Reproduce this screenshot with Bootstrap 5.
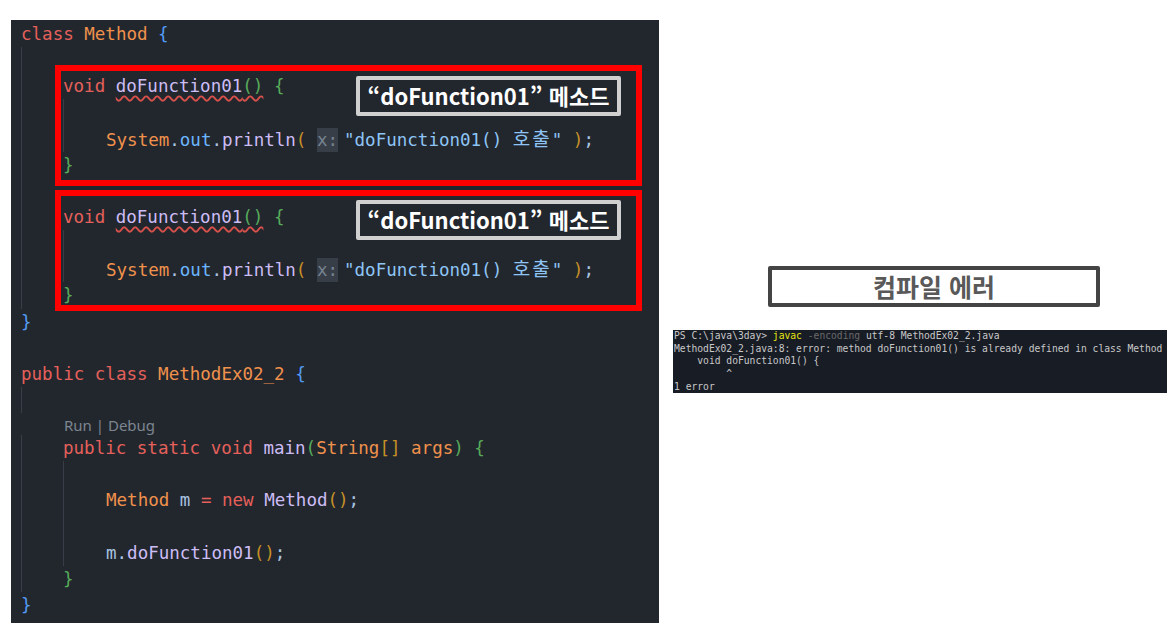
<!DOCTYPE html>
<html lang="ko">
<head>
<meta charset="utf-8">
<title>Method</title>
<link rel="stylesheet" href="https://cdn.jsdelivr.net/npm/bootstrap@5.3.0/dist/css/bootstrap.min.css">
<style>
body{background:#fff;height:642px;overflow:hidden}
.code-panel{width:648px;height:603px;margin:20px 0 0 11px;padding:1px 0 0 10px;background:#22272e;font-family:"DejaVu Sans Mono","Noto Sans CJK KR",monospace;font-size:17.52px;color:#adbac7;flex:none}
.ln{height:26.15px;line-height:26.15px;white-space:pre}
.gd{margin-left:0;border-left:1px solid #373e47;padding-left:42px}
.gd .gd{margin-left:-1px}
.gd>.ln{margin-left:-1px}
.gd .gd>.ln{margin-left:0}
.lens{height:22px;line-height:25px;font-family:"Noto Sans","Liberation Sans",sans-serif;font-size:15px;color:#7d8590;margin-left:43px}
.k{color:#e5605a}.t{color:#f0914c}.f{color:#cdbdf5}.v{color:#6cb6ff}.s{color:#8ec5f5}.p{color:#a9c3e0}
.b1{color:#539bf5}.b2{color:#57ab5a}.b3{color:#c69026}
.squig{text-decoration:underline wavy #d8504a 1.5px;text-underline-offset:3px}
.hint{background:#373e47;color:#768390;padding:2px 0;margin-right:6px}
.ko{font-size:19px;letter-spacing:2px}
.red-frame{left:44px;width:587px;border:6px solid #f00}
.frame-a{top:45px;height:121px}
.frame-b{top:170px;height:121px}
.tag{left:295px;top:5px;width:265px;height:40px;border:4px solid #d0d0d0;border-radius:2px;background:#22272e;color:#fff;font-family:"Noto Sans CJK KR","Liberation Sans",sans-serif;font-weight:700;font-size:22px;line-height:30px;white-space:nowrap}
.frame-b .tag{top:4px}
.side{margin-left:14px;width:494px;flex:none}
.cap{width:332px;height:41px;margin:266px 0 23px 95px;border:4px solid #444;border-radius:2px;color:#595959;font-family:"Noto Sans CJK KR",sans-serif;font-weight:700;font-size:25px;line-height:33px}
.term{height:63px;padding-left:1px;background:#181c25;color:#c8c8c8;font-family:"DejaVu Sans Mono",monospace;font-size:9.67px;line-height:12.7px;overflow:hidden}
.term div{white-space:pre}
.y{color:#e5e510}.g{color:#6a6a6a}
</style>
</head>
<body class="d-flex align-items-start m-0">
<div class="code-panel position-relative">
  <div class="ln"><span class="k">class</span> <span class="t">Method</span> <span class="b1">{</span></div>
  <div class="gd">
    <div class="ln"> </div>
    <div class="ln"><span class="k">void</span> <span class="squig"><span class="f">doFunction01</span><span class="b2">()</span></span> <span class="b2">{</span></div>
    <div class="gd">
      <div class="ln"> </div>
      <div class="ln"><span class="t">System</span><span class="p">.</span><span class="v">out</span><span class="p">.</span><span class="f">println</span><span class="b3">(</span> <span class="hint">x:</span><span class="s">"doFunction01() <span class="ko">호출</span>"</span> <span class="b3">)</span><span class="p">;</span></div>
    </div>
    <div class="ln"><span class="b2">}</span></div>
    <div class="ln"> </div>
    <div class="ln"><span class="k">void</span> <span class="squig"><span class="f">doFunction01</span><span class="b2">()</span></span> <span class="b2">{</span></div>
    <div class="gd">
      <div class="ln"> </div>
      <div class="ln"><span class="t">System</span><span class="p">.</span><span class="v">out</span><span class="p">.</span><span class="f">println</span><span class="b3">(</span> <span class="hint">x:</span><span class="s">"doFunction01() <span class="ko">호출</span>"</span> <span class="b3">)</span><span class="p">;</span></div>
    </div>
    <div class="ln"><span class="b2">}</span></div>
  </div>
  <div class="ln"><span class="b1">}</span></div>
  <div class="ln"> </div>
  <div class="ln"><span class="k">public</span> <span class="k">class</span> <span class="t">MethodEx02_2</span> <span class="b1">{</span></div>
  <div class="gd"><div class="ln"> </div></div>
  <div class="lens">Run | Debug</div>
  <div class="gd">
    <div class="ln"><span class="k">public</span> <span class="k">static</span> <span class="k">void</span> <span class="f">main</span><span class="b2">(</span><span class="t">String</span><span class="b3">[]</span> <span class="t">args</span><span class="b2">)</span> <span class="b2">{</span></div>
    <div class="gd">
      <div class="ln"> </div>
      <div class="ln"><span class="t">Method</span> <span class="p">m</span> <span class="k">=</span> <span class="k">new</span> <span class="f">Method</span><span class="b3">()</span><span class="p">;</span></div>
      <div class="ln"> </div>
      <div class="ln"><span class="p">m.</span><span class="f">doFunction01</span><span class="b3">()</span><span class="p">;</span></div>
    </div>
    <div class="ln"><span class="b2">}</span></div>
  </div>
  <div class="ln"><span class="b1">}</span></div>

  <div class="red-frame frame-a position-absolute"><div class="tag position-absolute text-center">“doFunction01” 메소드</div></div>
  <div class="red-frame frame-b position-absolute"><div class="tag position-absolute text-center">“doFunction01” 메소드</div></div>
</div>
<div class="side d-flex flex-column">
  <div class="cap text-center">컴파일 에러</div>
  <div class="term">
    <div><span>PS C:\java\3day&gt; </span><span class="y">javac</span><span> </span><span class="g">-encoding</span><span> utf-8 MethodEx02_2.java</span></div>
    <div>MethodEx02_2.java:8: error: method doFunction01() is already defined in class Method</div>
    <div>    void doFunction01() {</div>
    <div>         ^</div>
    <div>1 error</div>
  </div>
</div>
<script src="https://cdn.jsdelivr.net/npm/bootstrap@5.3.0/dist/js/bootstrap.bundle.min.js"></script>
</body>
</html>
